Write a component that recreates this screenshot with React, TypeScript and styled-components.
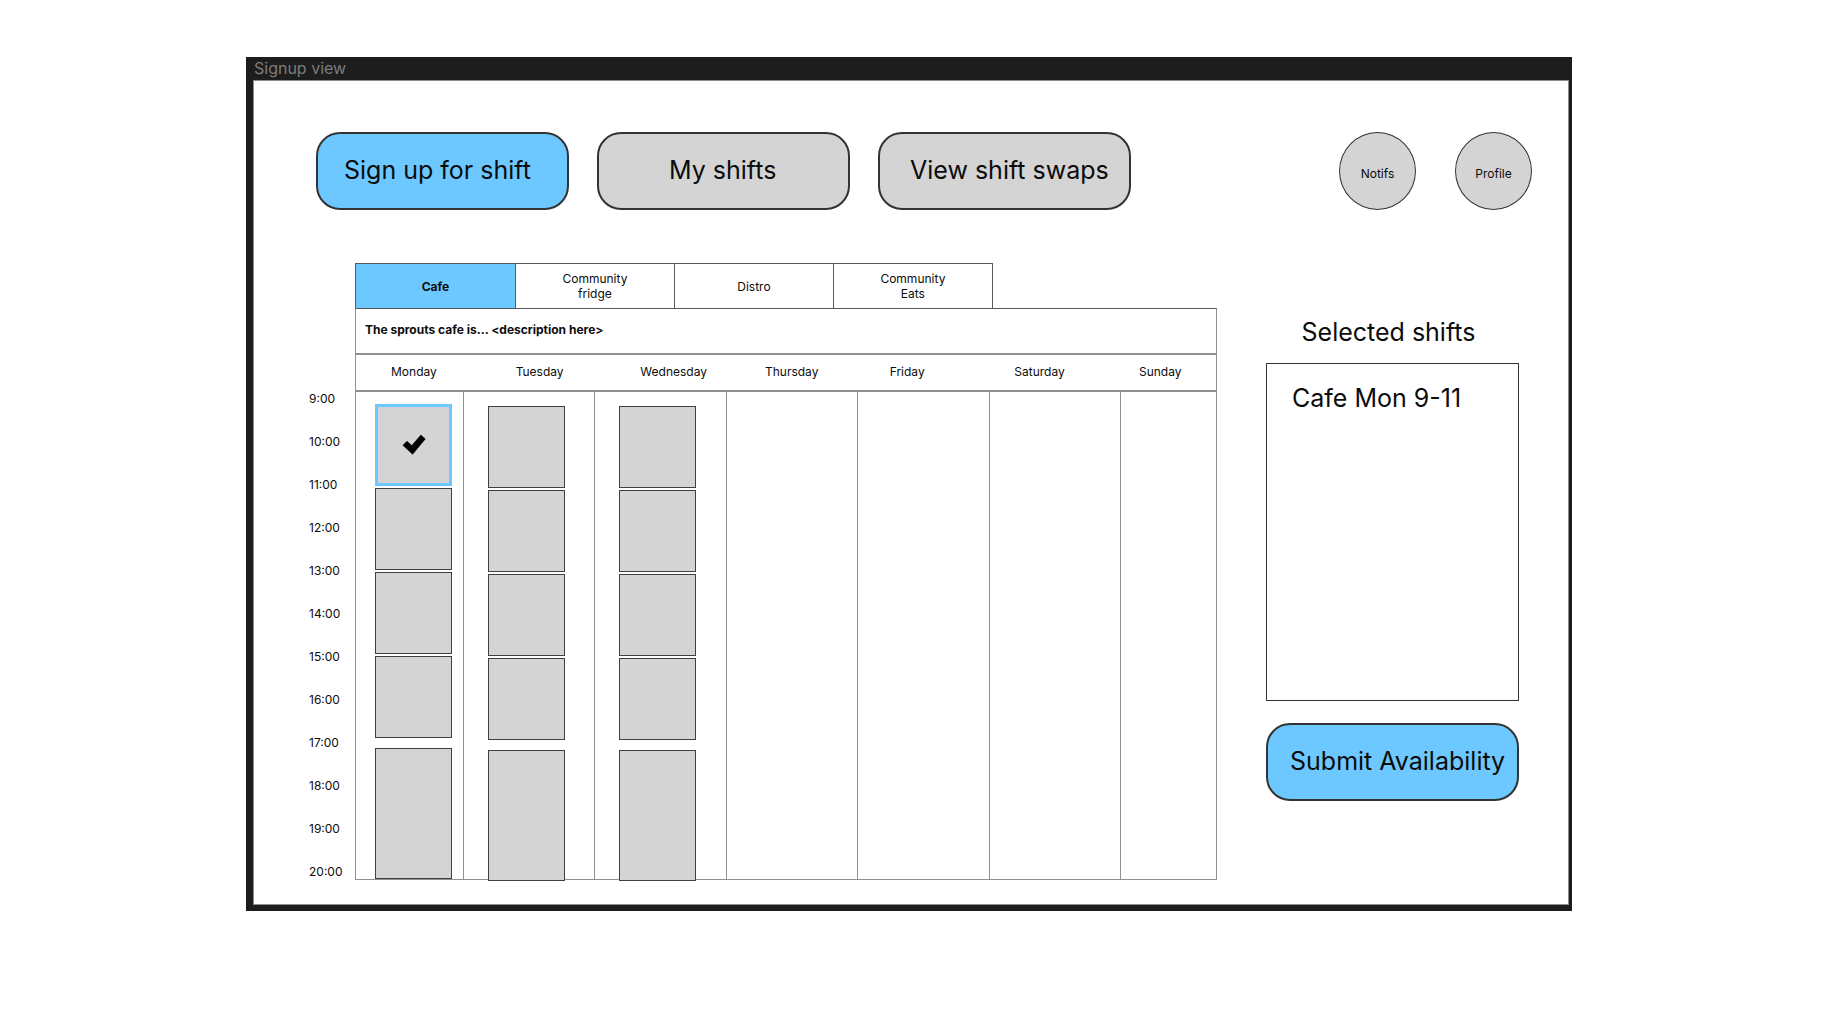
import React, { useState } from "react";
import styled, { createGlobalStyle, css } from "styled-components";

const colors = {
  frame: "#1d1d1d",
  frameLabel: "#7c7c7c",
  stageEdge: "#8c8c8c",
  accent: "#6dc8ff",
  fill: "#d4d4d4",
  outline: "#333333",
  slotLine: "#404040",
  tabLine: "#5a5a5a",
  gridLine: "#909090",
  text: "#0c0c0c",
};

const GlobalStyle = createGlobalStyle`
  *, *::before, *::after { box-sizing: border-box; }
  body {
    margin: 0;
    background: #ffffff;
    color: ${colors.text};
    font-family: Inter, "Liberation Sans", sans-serif;
    font-size: 12px;
    line-height: 15px;
  }
  button {
    margin: 0;
    padding: 0;
    color: inherit;
    font: inherit;
    cursor: pointer;
  }
`;

const Frame = styled.div`
  margin: 57px 270px 57px 246px;
  padding: 0 4px 7px 8px;
  background: ${colors.frame};
`;

const FrameLabel = styled.h1`
  margin: 0;
  padding: 1px 0 3px;
  color: ${colors.frameLabel};
  font-size: 16px;
  font-weight: 400;
  line-height: 20px;
`;

const Stage = styled.div`
  padding: 51px 0 11px;
  background: #ffffff;
  box-shadow: 0 0 0 1px ${colors.stageEdge};
`;

const Header = styled.header`
  display: flex;
  align-items: center;
  justify-content: space-between;
  padding: 0 36px 0 62px;
`;

const Nav = styled.nav`
  display: flex;
  gap: 28px;
`;

const Account = styled.div`
  display: flex;
  gap: 39px;
`;

const PillButton = styled.button<{ $active?: boolean; $inset: number }>`
  width: 253px;
  height: 78px;
  padding: 0 0 2px ${(p) => p.$inset}px;
  border: 2px solid ${colors.outline};
  border-radius: 24px;
  background: ${(p) => (p.$active ? colors.accent : colors.fill)};
  font-size: 25px;
  line-height: 30px;
  text-align: left;
  white-space: nowrap;
`;

const RoundButton = styled.button`
  width: 77px;
  height: 78px;
  padding-top: 4px;
  border: 1px solid ${colors.outline};
  border-radius: 50%;
  background: ${colors.fill};
`;

const Main = styled.main`
  display: flex;
  align-items: flex-start;
  padding: 53px 49px 0 55px;
`;

const TimeAxis = styled.ol`
  flex: none;
  width: 46px;
  margin: 0;
  padding: 114px 0 0;
  list-style: none;
`;

const TimeLabel = styled.li`
  height: 43px;
  line-height: 43px;
`;

const Schedule = styled.section`
  flex: 1;
  min-width: 0;
`;

const Tabs = styled.div`
  display: grid;
  grid-template-columns: repeat(4, 1fr);
  width: 74%;
  border: 1px solid ${colors.tabLine};
  border-bottom: 0;
`;

const Tab = styled.button<{ $active: boolean }>`
  height: 44px;
  border: 0;
  background: #ffffff;
  padding: 0 44px;

  & + & {
    border-left: 1px solid ${colors.tabLine};
  }

  ${(p) =>
    p.$active &&
    css`
      background: ${colors.accent};
      font-weight: 700;
    `}
`;

const Calendar = styled.div`
  border: 1px solid ${colors.gridLine};
  border-top-color: ${colors.tabLine};
`;

const Description = styled.p`
  margin: 0;
  padding: 13px 9px 16px;
  border-bottom: 2px solid ${colors.gridLine};
  font-weight: 700;
`;

const DayNames = styled.div`
  display: grid;
  grid-template-columns: repeat(6, 1fr) 77px;
  padding: 9px 0 11px 35px;
  border-bottom: 2px solid ${colors.gridLine};
`;

const DayColumns = styled.div`
  display: grid;
  grid-template-columns: 107px repeat(5, 1fr) 96px;
`;

const DayColumn = styled.div`
  padding-left: 19px;

  & + & {
    padding-left: 24px;
    border-left: 1px solid ${colors.gridLine};
  }
`;

const SlotStack = styled.div<{ $lowered: boolean }>`
  display: flex;
  flex-direction: column;
  gap: 2px;
  margin: ${(p) => (p.$lowered ? "14px 0 -2px" : "12px 0 0")};
`;

const Slot = styled.button<{ $selected: boolean; $evening: boolean }>`
  display: flex;
  align-items: center;
  justify-content: center;
  width: 77px;
  height: ${(p) => (p.$evening ? 131 : 82)}px;
  margin-top: ${(p) => (p.$evening ? 8 : 0)}px;
  border: ${(p) => (p.$selected ? `3px solid ${colors.accent}` : `1px solid ${colors.slotLine}`)};
  background: ${colors.fill};
`;

const Side = styled.aside`
  flex: none;
  width: 253px;
  margin-left: 49px;
  padding-top: 54px;
`;

const SideTitle = styled.h2`
  margin: 0 0 16px;
  padding-right: 8px;
  font-size: 25px;
  font-weight: 400;
  line-height: 30px;
  text-align: center;
`;

const SelectedList = styled.ul`
  min-height: 338px;
  margin: 0 0 22px;
  padding: 19px 25px;
  border: 1px solid ${colors.outline};
  font-size: 25px;
  line-height: 30px;
  list-style: none;
`;

const CheckIcon = () => (
  <svg width="24" height="22" viewBox="0 0 24 22" aria-hidden="true">
    <path
      d="M0.9 11.3 L5 7.2 L9.8 11.6 L18.9 1 L23.3 4.9 L10.6 20.3 Z"
      fill="#000000"
      stroke="#000000"
      strokeWidth="0.6"
      strokeLinejoin="round"
    />
  </svg>
);

const views = [
  { name: "Sign up for shift", inset: 26 },
  { name: "My shifts", inset: 70 },
  { name: "View shift swaps", inset: 30 },
];
const programs = ["Cafe", "Community fridge", "Distro", "Community Eats"];
const days = ["Monday", "Tuesday", "Wednesday", "Thursday", "Friday", "Saturday", "Sunday"];
const staffedDays = 3;
const hours = Array.from({ length: 12 }, (_, i) => `${i + 9}:00`);
const shifts = ["9-11", "11-13", "13-15", "15-17", "17-20"];

export default function App() {
  const [view, setView] = useState(views[0].name);
  const [program, setProgram] = useState(programs[0]);
  const [selected, setSelected] = useState<string[]>(["Cafe Mon 9-11"]);

  const toggle = (id: string) =>
    setSelected((list) => (list.includes(id) ? list.filter((s) => s !== id) : [...list, id]));

  return (
    <>
      <GlobalStyle />
      <Frame>
        <FrameLabel>Signup view</FrameLabel>
        <Stage>
          <Header>
            <Nav>
              {views.map((v) => (
                <PillButton
                  key={v.name}
                  type="button"
                  $active={v.name === view}
                  $inset={v.inset}
                  onClick={() => setView(v.name)}
                >
                  {v.name}
                </PillButton>
              ))}
            </Nav>
            <Account>
              <RoundButton type="button">Notifs</RoundButton>
              <RoundButton type="button">Profile</RoundButton>
            </Account>
          </Header>
          <Main>
            <TimeAxis>
              {hours.map((h) => (
                <TimeLabel key={h}>{h}</TimeLabel>
              ))}
            </TimeAxis>
            <Schedule>
              <Tabs role="tablist">
                {programs.map((p) => (
                  <Tab
                    key={p}
                    type="button"
                    role="tab"
                    aria-selected={p === program}
                    $active={p === program}
                    onClick={() => setProgram(p)}
                  >
                    {p}
                  </Tab>
                ))}
              </Tabs>
              <Calendar>
                <Description>The sprouts cafe is... &lt;description here&gt;</Description>
                <DayNames>
                  {days.map((d) => (
                    <span key={d}>{d}</span>
                  ))}
                </DayNames>
                <DayColumns>
                  {days.map((day, i) => (
                    <DayColumn key={day}>
                      {i < staffedDays && (
                        <SlotStack $lowered={i > 0}>
                          {shifts.map((shift, n) => {
                            const id = `${program} ${day.slice(0, 3)} ${shift}`;
                            const on = selected.includes(id);
                            return (
                              <Slot
                                key={shift}
                                type="button"
                                aria-label={`${day} ${shift}`}
                                aria-pressed={on}
                                $selected={on}
                                $evening={n === shifts.length - 1}
                                onClick={() => toggle(id)}
                              >
                                {on && <CheckIcon />}
                              </Slot>
                            );
                          })}
                        </SlotStack>
                      )}
                    </DayColumn>
                  ))}
                </DayColumns>
              </Calendar>
            </Schedule>
            <Side>
              <SideTitle>Selected shifts</SideTitle>
              <SelectedList>
                {selected.map((s) => (
                  <li key={s}>{s}</li>
                ))}
              </SelectedList>
              <PillButton type="button" $active $inset={22}>
                Submit Availability
              </PillButton>
            </Side>
          </Main>
        </Stage>
      </Frame>
    </>
  );
}
